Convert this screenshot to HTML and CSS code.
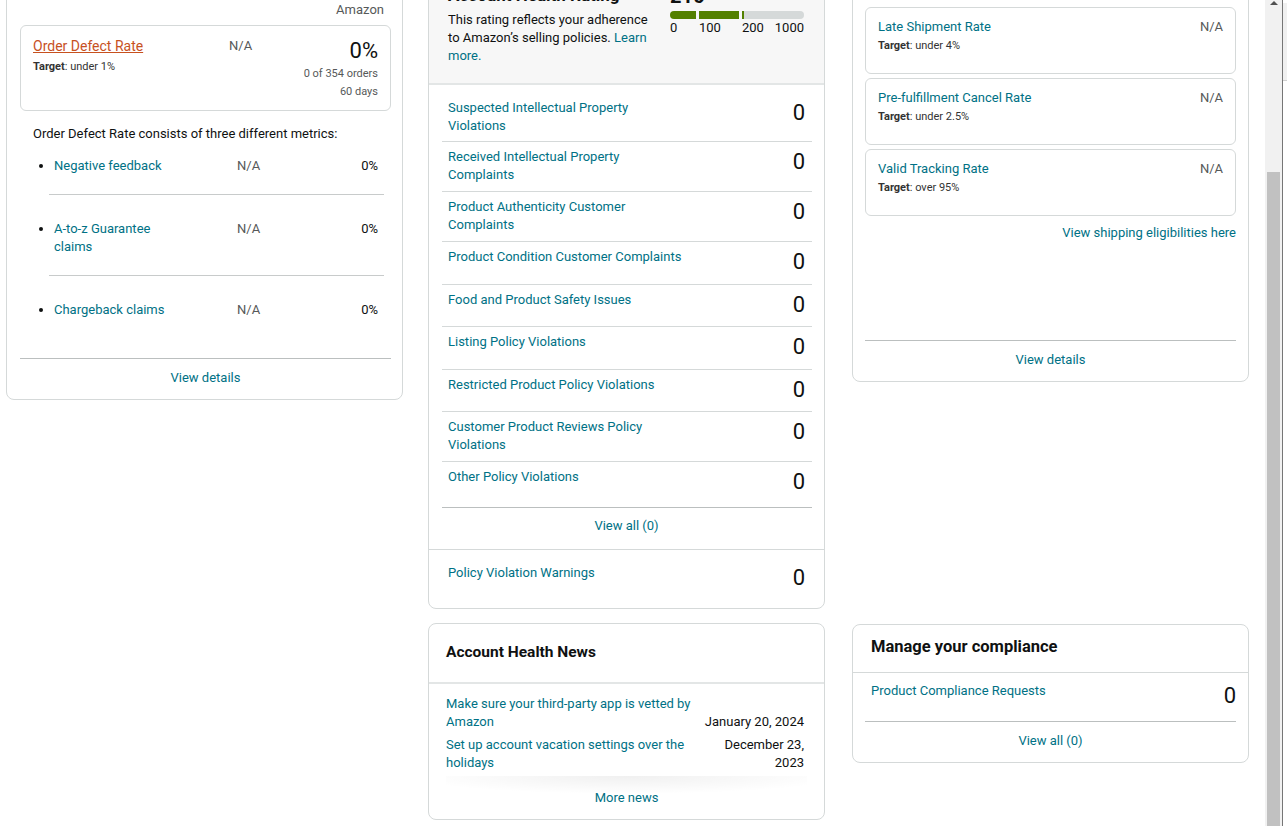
FILE: index.html
```html
<!DOCTYPE html>
<html lang="en">
  <head>
    <meta charset="UTF-8" />
    <meta name="viewport" content="width=device-width, initial-scale=1.0" />
    <title>Account Health</title>
    <link rel="stylesheet" href="styles.css">
  </head>
  <body>
    <div class="screen">
      <main class="dashboard">
        <!-- Customer service performance -->
        <section class="card card-csp">
          <h2 class="card-title">Customer Service Performance</h2>
          <div class="col-heads">
            <span></span>
            <span>Seller Fulfilled</span>
            <span class="col-fba">Fulfilled by Amazon</span>
          </div>

          <div class="odr-box">
            <div>
              <a href="#" class="odr-title">Order Defect Rate</a>
              <div class="target"><b>Target</b>: under 1%</div>
            </div>
            <div class="na">N/A</div>
            <div class="odr-value">
              <div class="big-num">0%</div>
              <div class="small-note">0 of 354 orders</div>
              <div class="small-note">60 days</div>
            </div>
          </div>

          <p class="intro">Order Defect Rate consists of three different metrics:</p>
          <ul class="odr-metrics">
            <li>
              <span class="metric-name"><a href="#">Negative feedback</a></span>
              <span class="na">N/A</span>
              <span>0%</span>
            </li>
            <li>
              <span class="metric-name"><a href="#">A-to-z Guarantee claims</a></span>
              <span class="na">N/A</span>
              <span>0%</span>
            </li>
            <li>
              <span class="metric-name"><a href="#">Chargeback claims</a></span>
              <span class="na">N/A</span>
              <span>0%</span>
            </li>
          </ul>
          <div class="card-foot"><a href="#">View details</a></div>
        </section>

        <!-- Account health rating -->
        <section class="card card-ahr">
          <div class="ahr-head">
            <div>
              <h2 class="ahr-title">Account Health Rating</h2>
              <p class="ahr-desc">
                This rating reflects your adherence to Amazon’s selling policies.
                <a href="#">Learn more.</a>
              </p>
            </div>
            <div>
              <div class="score">216</div>
              <div class="rating-bar">
                <span></span>
                <span></span>
                <span class="rest"><i></i></span>
              </div>
              <div class="rating-scale">
                <span>0</span>
                <span>100</span>
                <span class="scale-end"><span>200</span><span>1000</span></span>
              </div>
            </div>
          </div>

          <div class="ahr-violations">
            <ul class="ahr-list">
              <li><a href="#">Suspected Intellectual Property Violations</a><span class="count">0</span></li>
              <li><a href="#">Received Intellectual Property Complaints</a><span class="count">0</span></li>
              <li><a href="#">Product Authenticity Customer Complaints</a><span class="count">0</span></li>
              <li><a href="#">Product Condition Customer Complaints</a><span class="count">0</span></li>
              <li><a href="#">Food and Product Safety Issues</a><span class="count">0</span></li>
              <li><a href="#">Listing Policy Violations</a><span class="count">0</span></li>
              <li><a href="#">Restricted Product Policy Violations</a><span class="count">0</span></li>
              <li><a href="#">Customer Product Reviews Policy Violations</a><span class="count">0</span></li>
              <li><a href="#">Other Policy Violations</a><span class="count">0</span></li>
            </ul>
            <div class="ahr-viewall"><a href="#">View all (0)</a></div>
          </div>

          <div class="ahr-warnings">
            <a href="#">Policy Violation Warnings</a>
            <span class="count">0</span>
          </div>
        </section>

        <!-- Shipping performance -->
        <section class="card card-ship">
          <h2 class="card-title ship-title">Shipping Performance</h2>
          <div class="ship-box">
            <a href="#">Late Shipment Rate</a>
            <span class="na">N/A</span>
            <div class="target"><b>Target</b>: under 4%</div>
          </div>
          <div class="ship-box">
            <a href="#">Pre-fulfillment Cancel Rate</a>
            <span class="na">N/A</span>
            <div class="target"><b>Target</b>: under 2.5%</div>
          </div>
          <div class="ship-box">
            <a href="#">Valid Tracking Rate</a>
            <span class="na">N/A</span>
            <div class="target"><b>Target</b>: over 95%</div>
          </div>
          <div class="ship-link"><a href="#">View shipping eligibilities here</a></div>
          <div class="card-foot"><a href="#">View details</a></div>
        </section>

        <!-- News -->
        <section class="card card-news">
          <div class="news-head">
            <h2>Account Health News</h2>
          </div>
          <div class="news-list">
            <div class="news-item">
              <a href="#">Make sure your third-party app is vetted by Amazon</a>
              <span class="news-date">January 20, 2024</span>
            </div>
            <div class="news-item">
              <a href="#">Set up account vacation settings over the holidays</a>
              <span class="news-date">December 23, 2023</span>
            </div>
          </div>
          <div class="news-more"><a href="#">More news</a></div>
        </section>

        <!-- Compliance -->
        <section class="card card-compliance">
          <div class="compliance-head">
            <h2>Manage your compliance</h2>
          </div>
          <div class="compliance-body">
            <div class="compliance-row">
              <a href="#">Product Compliance Requests</a>
              <span class="count">0</span>
            </div>
            <div class="compliance-viewall"><a href="#">View all (0)</a></div>
          </div>
        </section>
      </main>
    </div>

    <div class="scrollbar">
      <span class="scroll-arrow"></span>
      <span class="scroll-thumb"></span>
    </div>
    <div class="window-edge"></div>
    <div class="outside"><span class="outside-bar"></span></div>
  </body>
</html>
```

FILE: styles.css
```css
* {
  box-sizing: border-box;
}
html,
body {
  height: 100%;
  margin: 0;
  overflow: hidden;
}
body {
  font-family: Roboto, "Noto Sans", sans-serif;
  font-size: 13px;
  line-height: 18px;
  color: #0f1111;
  background: #fff;
  display: flex;
}
a {
  color: #007185;
  text-decoration: none;
}
h2 {
  margin: 0;
}
.screen {
  flex: 0 0 1265px;
  height: 826px;
  overflow: hidden;
}
.dashboard {
  display: grid;
  grid-template-columns: repeat(3, 397px);
  column-gap: 25px;
  row-gap: 14px;
  align-items: start;
  margin: -70px 0 0 6px;
}
.card {
  border: 1px solid #d5d9d9;
  border-radius: 8px;
  background: #fff;
}
.card-title {
  padding-top: 14px;
  margin-bottom: 16px;
  font-size: 17px;
  line-height: 22px;
  font-weight: 700;
}
.na {
  color: #565959;
}
.target {
  font-size: 11px;
  line-height: 18px;
  color: #333;
}
.count {
  font-size: 22px;
  line-height: 28.5px;
  color: #0f1111;
}
.card-foot {
  border-top: 1px solid #bbbfbf;
  padding: 10px 0 12px;
  text-align: center;
}

/* customer service card */
.card-csp {
  padding: 0 11px 0 13px;
}
.col-heads {
  display: grid;
  grid-template-columns: 196px 1fr 70px;
  padding: 0 7px 0 13px;
  color: #565959;
}
.col-fba {
  text-align: right;
}
.odr-box {
  margin-top: 6px;
  border: 1px solid #d5d9d9;
  border-radius: 6px;
  padding: 10px 12px 9px;
  display: grid;
  grid-template-columns: 196px 1fr auto;
}
.odr-title {
  display: block;
  font-size: 14px;
  line-height: 20px;
  color: #c7511f;
  text-decoration: underline;
}
.odr-box .target {
  margin-top: 2px;
}
.odr-box .na {
  line-height: 20px;
}
.odr-value {
  text-align: right;
}
.big-num {
  font-size: 22px;
  line-height: 29px;
}
.small-note {
  font-size: 11px;
  color: #565959;
}
.intro {
  margin: 14px 0 0 13px;
}
.odr-metrics {
  list-style: none;
  margin: 0 7px 20px 29px;
  padding: 0;
}
.odr-metrics li {
  display: grid;
  grid-template-columns: 183px 1fr auto;
  padding: 25px 6px 19px 5px;
  border-bottom: 1px solid #c8cbcb;
}
.odr-metrics li:first-child {
  padding-top: 14px;
}
.odr-metrics li:last-child {
  border-bottom: none;
}
.metric-name {
  padding-right: 60px;
}
.metric-name::before {
  content: "";
  display: inline-block;
  width: 4px;
  height: 4px;
  border-radius: 50%;
  background: #0f1111;
  margin: 0 11px 2px -15px;
  vertical-align: middle;
}

/* account health rating card */
.ahr-head {
  background: #f7f7f7;
  border-bottom: 2px solid #e3e6e6;
  border-radius: 8px 8px 0 0;
  padding: 53px 20px 18px 19px;
  display: grid;
  grid-template-columns: 1fr 134px;
  column-gap: 20px;
}
.ahr-title {
  font-size: 17px;
  line-height: 22px;
}
.ahr-desc {
  margin: 5px 0 0;
}
.score {
  font-size: 20px;
  line-height: 24px;
  font-weight: 700;
}
.rating-bar,
.rating-scale {
  display: grid;
  grid-template-columns: 26px 40px 1fr;
  column-gap: 3px;
}
.rating-bar {
  height: 8px;
  margin-top: 3px;
}
.rating-bar span {
  background: #538000;
}
.rating-bar span:first-child {
  border-radius: 4px 0 0 4px;
}
.rating-bar .rest {
  display: flex;
  background: #d5d9d9;
  border-radius: 0 4px 4px 0;
}
.rest i {
  width: 2px;
  background: #538000;
}
.scale-end {
  display: flex;
  justify-content: space-between;
}
.ahr-violations {
  border-bottom: 1px solid #d5d9d9;
}
.ahr-list {
  list-style: none;
  margin: 0 12px 0 13px;
  padding: 7px 0 0;
}
.ahr-list li {
  display: flex;
  justify-content: space-between;
  align-items: flex-start;
  padding: 6px 7px 7px 6px;
  border-bottom: 1px solid #d5d9d9;
}
.ahr-list li:first-child {
  padding-top: 7px;
  padding-bottom: 6px;
}
.ahr-list li a {
  width: 240px;
}
.ahr-list li:last-child {
  padding-bottom: 10px;
  border-bottom-color: #bbbfbf;
}
.ahr-viewall {
  text-align: center;
  padding: 9px 0 14px;
}
.ahr-warnings {
  display: flex;
  justify-content: space-between;
  align-items: flex-start;
  padding: 14px 19px 16px;
}

/* shipping card */
.card-ship,
.card-compliance {
  margin: 0 -2px 0 2px;
}
.card-ship {
  padding: 0 12px;
}
.ship-title {
  margin-bottom: 40px;
}
.ship-box {
  display: grid;
  grid-template-columns: 1fr auto;
  border: 1px solid #d5d9d9;
  border-radius: 6px;
  padding: 10px 12px 18px;
}
.ship-box .target {
  line-height: 19px;
}
.ship-box + .ship-box {
  margin-top: 4px;
}
.ship-link {
  text-align: right;
  margin: 8px 0 98px;
}

/* news card */
.card-news {
  grid-column: 2;
}
.news-head {
  padding: 18px 17px 20px;
  border-bottom: 2px solid #e3e6e6;
}
.news-head h2 {
  font-size: 15.5px;
  line-height: 20px;
}
.news-list {
  padding: 11px 20px 4px 17px;
}
.news-item {
  display: grid;
  grid-template-columns: 1fr 100px;
  column-gap: 8px;
  align-items: end;
}
.news-item + .news-item {
  margin-top: 5px;
}
.news-date {
  text-align: right;
}
.news-more {
  margin: 0 17px;
  padding: 13px 0 12px;
  text-align: center;
  background: radial-gradient(ellipse 60% 18px at 50% 0, rgba(0, 0, 0, 0.06), transparent);
}

/* compliance card */
.card-compliance {
  grid-column: 3;
  margin-top: 1px;
}
.compliance-head {
  padding: 11px 18px 14px;
  border-bottom: 1px solid #d5d9d9;
}
.compliance-head h2 {
  font-size: 16.5px;
  line-height: 22px;
}
.compliance-body {
  padding: 0 12px;
}
.compliance-row {
  display: flex;
  justify-content: space-between;
  align-items: flex-start;
  padding: 9px 0 10px 6px;
  border-bottom: 1px solid #bbbfbf;
}
.compliance-viewall {
  text-align: center;
  padding: 10px 0 12px;
}

/* window chrome on the right */
.scrollbar {
  flex: 0 0 17px;
  background: #f1f1f1;
  display: flex;
  flex-direction: column;
  align-items: center;
}
.scroll-arrow {
  width: 0;
  height: 0;
  margin-top: 1px;
  border-left: 4px solid transparent;
  border-right: 4px solid transparent;
  border-bottom: 4px solid #505050;
}
.scroll-thumb {
  width: 13px;
  margin-top: 167px;
  flex: 1;
  background: #c1c1c1;
}
.window-edge {
  flex: 0 0 1px;
  background: #767676;
}
.outside {
  flex: 1;
  background: #fff;
}
.outside-bar {
  display: block;
  height: 78px;
  margin-top: 3px;
  background: #f0f0f0;
  border-bottom: 1px solid #d0d0d0;
}
```
